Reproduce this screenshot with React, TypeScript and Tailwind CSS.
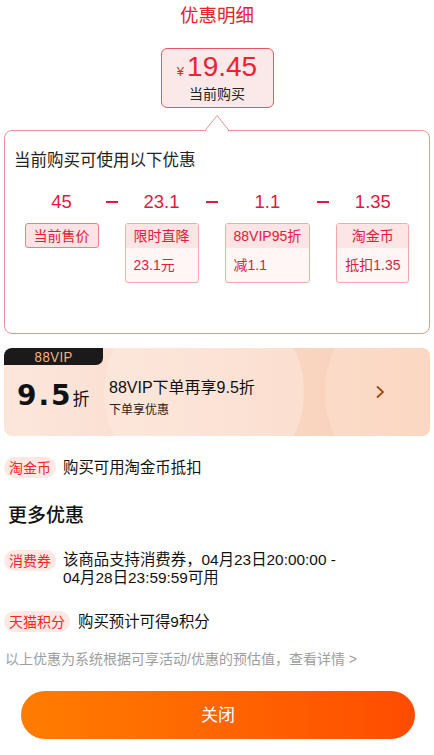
import React from "react";

const FONT = "font-['Liberation_Sans','Noto_Sans_CJK_SC',sans-serif]";

function Col({ num, head, body, single }: { num: string; head: string; body?: string; single?: boolean }) {
  return (
    <div className="flex flex-col items-center">
      <div className="h-[22px] leading-[22px] text-[18.5px] text-[#e6173c]">{num}</div>
      {single ? (
        <div className="mt-[10px] h-[25px] rounded-[3px] border border-[#e98282] bg-[#fde3e5] px-[8px] flex items-center text-[14px] leading-none text-[#e0203a]">
          {head}
        </div>
      ) : (
        <div className="mt-[10px] h-[60px] rounded-[3px] border border-[#f3a9a9] bg-[#fff6f5] flex flex-col overflow-hidden">
          <div className="h-[24px] bg-[#fde4e5] px-[8px] flex items-center justify-center text-[14px] leading-none text-[#e0203a] whitespace-nowrap">
            {head}
          </div>
          <div className="flex-1 px-[8px] flex items-center text-[14px] leading-none text-[#e0203a] whitespace-nowrap">
            {body}
          </div>
        </div>
      )}
    </div>
  );
}

function Dash() {
  return (
    <div className="h-[22px] w-[12px] flex items-center">
      <div className="h-[2px] w-[12px] bg-[#e6173c]" />
    </div>
  );
}

function Badge({ children }: { children: React.ReactNode }) {
  return (
    <div className="h-[21px] shrink-0 rounded-full bg-[#fde8e4] px-[5px] flex items-center text-[14px] leading-none text-[#f0281e] whitespace-nowrap">
      {children}
    </div>
  );
}

export default function App() {
  return (
    <div className={`w-[434px] h-[755px] bg-white overflow-hidden ${FONT} text-[#111]`}>
      <div className="h-[32px] flex items-center justify-center text-[18.5px] leading-none text-[#e3242b]">优惠明细</div>

      <div className="mt-[16px] flex justify-center">
        <div className="w-[113px] h-[60px] rounded-[6px] border border-[#e8585f] bg-[#fbe8e8] flex flex-col items-center">
          <div className="mt-[3px] flex items-baseline text-[#ee2233]">
            <span className="text-[13px] mr-[3px]">¥</span>
            <span className="text-[28px] leading-[30px]">19.45</span>
          </div>
          <div className="mt-[3px] text-[14px] leading-[18px] text-[#222]">当前购买</div>
        </div>
      </div>

      <div className="relative mt-[22px] mx-[4px] h-[204px] rounded-[8px] border border-[#f09090] flex flex-col">
        <svg className="absolute top-[-16px] left-1/2 -translate-x-1/2" width="24" height="17" viewBox="0 0 24 17">
          <polygon points="0,17 12,1 24,17" fill="#ffffff" />
          <polyline points="0,15.5 12,0.5 24,15.5" fill="none" stroke="#f09090" strokeWidth="1" />
        </svg>
        <div className="pt-[17px] pl-[9px] text-[16.5px] leading-[24px] text-[#222]">当前购买可使用以下优惠</div>
        <div className="mt-[19px] flex justify-center items-start gap-[7px]">
          <Col num="45" head="当前售价" single />
          <Dash />
          <Col num="23.1" head="限时直降" body="23.1元" />
          <Dash />
          <Col num="1.1" head="88VIP95折" body="减1.1" />
          <Dash />
          <Col num="1.35" head="淘金币" body="抵扣1.35" />
        </div>
      </div>

      <div className="relative mt-[14px] mx-[4px] h-[88px] rounded-[8px] overflow-hidden bg-gradient-to-r from-[#fce6dc] via-[#fadccc] to-[#f8cbae]">
        <div className="absolute left-[100px] top-[-56px] w-[200px] h-[200px] rounded-full bg-[#fde9df] opacity-50" />
        <div className="absolute left-[321px] top-[-61px] w-[210px] h-[210px] rounded-full bg-[#fde3d3] opacity-50" />
        <div className="relative w-[99px] h-[17px] bg-[#1a1a1a] rounded-br-[7px] flex items-center justify-center">
          <span className="text-[15px] leading-none text-[#f3b48a] scale-x-[0.88] tracking-[0.5px]">88VIP</span>
        </div>
        <div className="relative flex items-start">
          <div className="w-[105px] shrink-0 pl-[13px] pt-[16px] flex items-baseline">
            <span className="font-['DejaVu_Sans',sans-serif] font-bold text-[28px] leading-[29px] tracking-[2px] text-[#111]">9.5</span>
            <span className="text-[17px] leading-none text-[#111]">折</span>
          </div>
          <div className="pt-[13px] flex flex-col">
            <div className="text-[16px] leading-[20px] text-[#111]">88VIP下单再享9.5折</div>
            <div className="mt-[4px] text-[12px] leading-[16px] text-[#222]">下单享优惠</div>
          </div>
          <svg className="ml-auto mr-[44px] mt-[20px]" width="12" height="14" viewBox="0 0 12 14">
            <polyline points="3,1.5 9,7 3,12.5" fill="none" stroke="#9c4a14" strokeWidth="1.8" />
          </svg>
        </div>
      </div>

      <div className="mt-[21px] pl-[4px] flex items-center gap-[7px]">
        <Badge>淘金币</Badge>
        <div className="text-[15.4px] leading-[21px] text-[#111]">购买可用淘金币抵扣</div>
      </div>

      <div className="mt-[25px] pl-[8px] text-[19px] leading-[26px] font-medium text-[#111]">更多优惠</div>

      <div className="mt-[21px] pl-[4px] flex items-start gap-[7px]">
        <Badge>消费券</Badge>
        <div className="text-[15.4px] leading-[18px] text-[#111] whitespace-nowrap pt-[1px]">
          该商品支持消费券，04月23日20:00:00 -<br />04月28日23:59:59可用
        </div>
      </div>

      <div className="mt-[24px] pl-[4px] flex items-center gap-[8px]">
        <Badge>天猫积分</Badge>
        <div className="text-[15.4px] leading-[21px] text-[#111]">购买预计可得9积分</div>
      </div>

      <div className="mt-[17px] pl-[5px] text-[14px] leading-[20px] text-[#9e9e9e] whitespace-nowrap">
        以上优惠为系统根据可享活动/优惠的预估值，查看详情 &gt;
      </div>

      <div className="mt-[22px] ml-[21px] w-[394px] h-[48px] rounded-full bg-gradient-to-r from-[#ff7c00] to-[#ff4b00] flex items-center justify-center text-[17px] leading-none text-white">
        关闭
      </div>
    </div>
  );
}
